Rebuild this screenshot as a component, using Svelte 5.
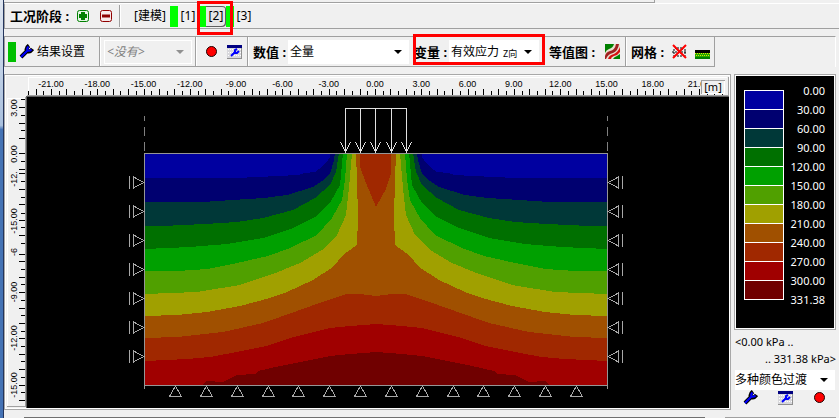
<script lang="ts">
	type Point = [number, number];

	const bands = [
		{ color: '#0000a0', label: '0.00' },
		{ color: '#000070', label: '30.00' },
		{ color: '#003838', label: '60.00' },
		{ color: '#007000', label: '90.00' },
		{ color: '#00a000', label: '120.00' },
		{ color: '#50a000', label: '150.00' },
		{ color: '#a0a000', label: '180.00' },
		{ color: '#a05000', label: '210.00' },
		{ color: '#a02800', label: '240.00' },
		{ color: '#a00000', label: '270.00' },
		{ color: '#700000', label: '300.00' }
	];
	const legendLabels = [...bands.map((b) => b.label), '331.38'];

	// left half of every isoline, from the soil edge towards the axis
	const axis = 376;
	const isolines: Point[][] = [
		[[145, 178], [237, 178], [278, 176], [298, 175], [304, 173], [315, 172], [322, 167], [328, 160], [330, 157], [330, 153]],
		[[145, 202], [203, 202], [232, 200], [264, 198], [287, 195], [300, 191], [313, 187], [322, 181], [330, 174], [334, 160], [335, 153]],
		[[145, 226], [162, 226], [205, 224], [237, 222], [263, 218], [293, 210], [315, 198], [330, 185], [336, 172], [339, 153]],
		[[145, 249], [190, 247], [227, 244], [263, 238], [293, 228], [315, 217], [330, 203], [340, 185], [343, 153]],
		[[145, 271], [177, 271], [207, 269], [237, 263], [268, 256], [290, 248], [317, 235], [332, 218], [342, 200], [345, 180], [347, 153]],
		[[145, 294], [197, 292], [240, 285], [273, 274], [300, 263], [322, 250], [337, 235], [346, 215], [349, 188], [352, 153]],
		[[145, 316], [177, 315], [207, 312], [240, 306], [270, 298], [287, 292], [313, 280], [333, 267], [343, 255], [357, 245], [358, 217], [357, 180], [356, 153]],
		[[145, 338], [177, 337], [223, 332], [263, 323], [297, 311], [328, 300], [347, 294], [360, 294], [376, 296]],
		[[145, 361], [187, 359], [210, 357], [237, 352], [267, 346], [290, 338], [330, 328], [350, 326], [376, 324]],
		[[201, 386], [207, 381], [223, 382], [237, 375], [255, 374], [258, 371], [280, 366], [330, 356], [350, 354], [376, 352]]
	];

	function region(line: Point[]) {
		const right = line.map(([x, y]): Point => [axis * 2 - x, y]).reverse();
		const start = line[0][0];
		const all = [[start, 386], ...line, ...right, [axis * 2 - start, 386]];
		return all.map((p) => p.join(',')).join(' ');
	}

	const scale = 15.43;
	const xTicks = Array.from({ length: 91 }, (_, i) => (i - 45) / 2).map((m) => ({
		x: Math.round(375 + m * scale) + 0.5,
		long: Number.isInteger(m)
	}));
	const xLabels = [-21, -18, -15, -12, -9, -6, -3, 0, 3, 6, 9, 12, 15, 18, 21];

	const yLong = [107, 123, 138, 153, 169, 173, 189, 204, 220, 235, 254, 261, 277, 292, 308, 323, 338, 354, 369, 385, 400];
	const yShort = [99, 115, 130, 161, 181, 197, 213, 227, 243, 269, 284, 300, 315, 331, 346, 361, 377, 392];
	const yLabels = [
		{ y: 108, text: '3.00' },
		{ y: 154, text: '0.00' },
		{ y: 179, text: '-12.' },
		{ y: 221, text: '-15.00' },
		{ y: 252, text: '-6' },
		{ y: 292, text: '-9.00' },
		{ y: 338, text: '-12.00' },
		{ y: 385, text: '-15.00' }
	];

	const sideSupports = [182, 211, 240, 269, 298, 327, 356];
	const baseSupports = [175, 206, 237, 268, 298, 329, 360, 391, 422, 453, 483, 514, 545, 576];
	const loads = [345, 360, 375, 391, 406];

	let stage = $state(2);
</script>

{#snippet wrench()}
	<svg class="icon" viewBox="0 0 15 15" aria-hidden="true">
		<path d="M2 13 L8 7 M10 1.5 Q6.500 4 8 7 Q11 8.500 13.500 5" fill="none" stroke="#000" stroke-width="4" />
		<path d="M2 13 L8 7 M9.500 2.500 Q7.500 4.500 8.500 6.500 Q10.500 7.500 12.500 5.500" fill="none" stroke="#0000ff" stroke-width="2" />
	</svg>
{/snippet}

{#snippet panel()}
	<svg class="icon" viewBox="0 0 15 15" shape-rendering="crispEdges" aria-hidden="true">
		<rect x="0" y="1" width="15" height="14" fill="#d8d8dc" />
		<path d="M0 14.5 H14.5 V4" fill="none" stroke="#909090" />
		<path d="M1 5.5 H14 M1 8.5 H14 M1 11.5 H14" stroke="#fff" stroke-dasharray="1 1" />
		<rect x="0" y="1" width="15" height="3" fill="#000080" />
		<path d="M4 12 L8 8 V6 L10 5 M8 9 H10 L12 7" fill="none" stroke="#0000ff" stroke-width="2" shape-rendering="auto" />
	</svg>
{/snippet}

{#snippet record()}
	<svg class="icon" viewBox="0 0 15 15" aria-hidden="true">
		<circle cx="7.5" cy="7.5" r="5" fill="#ff0000" stroke="#200000" />
	</svg>
{/snippet}

<div class="window">
	<div class="edge"></div>
	<div class="content">
		<div class="strip"></div>

		<div class="stages">
			<strong>工况阶段 :</strong>
			<button class="tool" aria-label="添加工况">
				<svg class="icon small" viewBox="0 0 12 12" aria-hidden="true">
					<rect x=".5" y=".5" width="11" height="11" rx="2" fill="#e4f4e4" stroke="#008000" />
					<path d="M6 2 V10 M2 6 H10" stroke="#008000" stroke-width="4" />
				</svg>
			</button>
			<button class="tool" aria-label="删除工况">
				<svg class="icon small" viewBox="0 0 12 12" aria-hidden="true">
					<rect x=".5" y=".5" width="11" height="11" rx="2" fill="#f8e8e8" stroke="#900000" />
					<path d="M2 6 H10" stroke="#900000" stroke-width="3" />
				</svg>
			</button>
			<span class="sep"></span>
			<button class="model">[建模]</button>
			{#each [1, 2, 3] as n (n)}
				<div class="stage-slot" class:marked={n === 2}>
					<button class="stage" class:pressed={stage === n} onclick={() => (stage = n)}>[{n}]</button>
				</div>
			{/each}
		</div>

		<div class="toolbar">
			<div class="tools">
				<button class="settings">{@render wrench()}结果设置</button>
				<span class="sep"></span>
				<span class="combo disabled">
					<select aria-label="结果视图" disabled><option>&lt;没有&gt;</option></select>
					<i class="arrow"></i>
				</span>
				<span class="sep"></span>
				<div class="pair">
					<button class="tool" aria-label="记录">{@render record()}</button>
					<button class="tool" aria-label="窗口设置">{@render panel()}</button>
				</div>
				<span class="sep"></span>
				<div class="field values-field">
					<label for="values">数值 :</label>
					<span class="combo wide">
						<select id="values"><option>全量</option></select>
						<i class="arrow"></i>
					</span>
				</div>
				<div class="field marked-field">
					<label for="variable">变量 :</label>
					<span class="combo variable">
						<select id="variable"><option>有效应力</option></select>
						<small>Z向</small>
						<i class="arrow"></i>
					</span>
				</div>
				<div class="field contour">
					<strong>等值图 :</strong>
					<button class="tool" aria-label="等值图">
						<svg class="icon" viewBox="0 0 15 15" aria-hidden="true">
							<rect width="15" height="15" fill="#e8e0d0" />
							<path d="M0 0 H9 Q8 4 4 5 Q1 6 0 9 Z" fill="#008000" />
							<path d="M0 12 Q1 8 5 7 Q10 6 11 0 H14 Q13 7 8 9 Q3 10 1 15 H0 Z" fill="#a02020" />
							<path d="M3 15 Q4 11 9 10 Q13 8 15 3 V8 Q13 11 9 12 Q6 13 6 15 Z" fill="#d81010" />
							<path d="M8 15 Q9 13 12 12 L15 10 V15 Z" fill="#008000" />
						</svg>
					</button>
				</div>
				<span class="sep"></span>
				<div class="field mesh">
					<strong>网格 :</strong>
					<button class="tool" aria-label="隐藏网格">
						<svg class="icon" viewBox="0 0 15 15" aria-hidden="true">
							<path d="M0 8 H15 M3 4 L12 12 M3 12 L12 4 M2 5 V12 M13 5 V12 M5 4 H10 M5 12 H10" fill="none" stroke="#000" stroke-dasharray="2 1" />
							<path d="M1 1 L14 14 M14 1 L1 14" stroke="#ff0000" stroke-width="2" />
						</svg>
					</button>
					<button class="tool" aria-label="显示地表">
						<svg class="icon" viewBox="0 0 15 15" shape-rendering="crispEdges" aria-hidden="true">
							<rect y="6" width="15" height="3" fill="#000" />
							<rect y="9" width="15" height="6" fill="#20a800" />
							<path d="M0 9.5 H15 M1 11.5 H15" stroke="#e0e000" stroke-dasharray="1 1" />
							<rect y="13" width="15" height="2" fill="#008000" />
						</svg>
					</button>
				</div>
			</div>
		</div>

		<main>
			<div class="frame">
				<svg class="plot" viewBox="6 76 723 332" shape-rendering="crispEdges" role="img" aria-label="有效应力 Z向">
					<rect x="6" y="76" width="723" height="332" fill="#f0f0f0" />
					<rect x="27" y="97" width="702" height="311" />

					<!-- rulers -->
					<path d="M28.5 95 V77.5 H727 M7.5 406 V98.5 H25" fill="none" stroke="#fff" />
					<path d="M27 95.5 H728.5 V77 M7 406.5 H25.5 V97" fill="none" stroke="#a0a0a0" />
					<path d="M27 96.5 H729 M26.5 96 V408" fill="none" stroke="#606060" />
					{#each xTicks as t}
						<line x1={t.x} x2={t.x} y1={t.long ? 89 : 91} y2="95" stroke="#000" />
					{/each}
					{#each xLabels as m}
						<text x={375 + m * scale} y="87" text-anchor="middle">{m.toFixed(2)}</text>
					{/each}
					{#each yLong as y}
						<line x1="19" x2="25" y1={y + 0.5} y2={y + 0.5} stroke="#000" />
					{/each}
					{#each yShort as y}
						<line x1="21" x2="25" y1={y + 0.5} y2={y + 0.5} stroke="#000" />
					{/each}
					{#each yLabels as l}
						<text transform="translate(17 {l.y}) rotate(-90)" text-anchor="middle">{l.text}</text>
					{/each}
					<rect x="701.5" y="80.5" width="23" height="13" fill="#f0f0f0" stroke="#a0a0a0" />
					<path d="M702 93.5 H724.5 V81" fill="none" stroke="#fff" />
					<text class="unit" x="713" y="91" text-anchor="middle">[m]</text>

					<!-- stress field -->
					<rect x="145" y="154" width="462" height="232" fill={bands[0].color} />
					{#each isolines as line, i}
						<polygon points={region(line)} fill={bands[i + 1].color} />
					{/each}
					<polygon points="360,153 360,167 366,183 376,207 386,189 391,173 391,153" fill={bands[8].color} />

					<path d="M144.5 389 V153.5 H607.5 V389 M144 385.5 H608" fill="none" stroke="#969696" />
					{#each [144.5, 607.5] as x}
						<path d="M{x} 116 V121 M{x} 127 V136 M{x} 142 V151" stroke="#808080" />
					{/each}

					<!-- supports -->
					<g fill="none" stroke="#a8a8a8">
						{#each sideSupports as y}
							<path d="M129.5 {y - 6} V{y + 7} M133.5 {y - 6} V{y + 6} L144 {y + 0.5} L133.5 {y - 5}" />
							<path d="M622.5 {y - 6} V{y + 7} M618.5 {y - 6} V{y + 6} L608 {y + 0.5} L618.5 {y - 5}" />
						{/each}
						{#each baseSupports as x}
							<path d="M{x + 0.5} 386 L{x - 5.5} 396.5 H{x + 6.5} Z" />
						{/each}
					</g>

					<!-- surface load -->
					<g fill="none" stroke="#e0e0e0">
						<path d="M345 108.5 H407" />
						{#each loads as x}
							<path d="M{x + 0.5} 108 V153 M{x - 4.5} 142 L{x + 0.5} 152 L{x + 5.5} 142" />
						{/each}
					</g>
				</svg>
			</div>

			<aside>
				<div class="legend">
					<div class="swatches">
						{#each bands as b}
							<span style="background-color: {b.color}"></span>
						{/each}
					</div>
					<div class="values">
						{#each legendLabels as l}
							<span>{l}</span>
						{/each}
					</div>
				</div>
				<p class="range">&lt;0.00 kPa ..</p>
				<p class="range end">.. 331.38 kPa&gt;</p>
				<span class="combo palette">
					<select aria-label="颜色"><option>多种颜色过渡</option></select>
					<i class="arrow"></i>
				</span>
				<div class="actions">
					<button class="tool" aria-label="设置">{@render wrench()}</button>
					<button class="tool" aria-label="窗口设置">{@render panel()}</button>
					<button class="tool" aria-label="记录">{@render record()}</button>
				</div>
			</aside>
		</main>
		<footer><span></span><span></span></footer>
	</div>
</div>

<style>
	:global(body) {
		background-color: #f0f0f0;
	}

	.window {
		display: flex;
		font-family: 'Noto Sans', 'Noto Sans CJK SC', sans-serif;
		font-size: 12px;
		line-height: 16px;
		color: #000;
		background-color: #f0f0f0;
	}

	.edge {
		flex: none;
		width: 3px;
		border-right: 1px solid #24355c;
		background: linear-gradient(#dfe6f0, #a9c0de 30%, #4573b5 31%, #4573b5);
	}

	.content {
		flex: 1;
		min-width: 0;
	}

	.strip {
		box-sizing: border-box;
		width: 78%;
		height: 3px;
		border-right: 1px solid #a0a0a0;
		border-bottom: 1px solid #a0a0a0;
	}

	button,
	select {
		margin: 0;
		padding: 0;
		border: 0;
		font: inherit;
		color: inherit;
		background: none;
		appearance: none;
	}

	.tool {
		display: flex;
	}

	.icon {
		display: block;
		width: 15px;
		height: 15px;
	}

	.icon.small {
		width: 12px;
		height: 12px;
	}

	strong,
	label {
		font-size: 13px;
		font-weight: 700;
		white-space: nowrap;
	}

	.sep {
		align-self: stretch;
		flex: none;
		width: 1px;
		background-color: #a0a0a0;
		border-right: 1px solid #fff;
	}

	.stages {
		display: flex;
		align-items: center;
		box-sizing: border-box;
		height: 26px;
		padding-left: 5px;
		border-left: 1px solid #a0a0a0;
		border-top: 1px solid #fff;
		border-bottom: 1px solid #a0a0a0;
	}

	.stages strong {
		width: 65px;
	}

	.stages .tool {
		margin-left: 2px;
		margin-right: 9px;
	}

	.stages .sep {
		margin: 1px 13px 1px -2px;
	}

	.model {
		width: 36px;
		white-space: nowrap;
		text-align: left;
	}

	.stage-slot {
		position: relative;
	}

	.stage {
		box-sizing: border-box;
		display: block;
		width: 28px;
		height: 21px;
		border-left: 8px solid #00ff00;
		text-align: center;
	}

	.stage.pressed {
		border-radius: 0 4px 4px 0;
		background-color: #e6e6e6;
		box-shadow: inset -1px -1px 0 #606060, inset 0 1px 0 #606060;
	}

	.marked::after,
	.marked-field::after {
		content: '';
		position: absolute;
		z-index: 1;
		border: 3px solid #ff0000;
		pointer-events: none;
	}

	.marked::after {
		inset: -5px -7px -8px -1px;
	}

	.toolbar {
		display: flex;
		margin: 7px 3px 7px 0;
		border-top: 1px solid #a0a0a0;
		border-left: 1px solid #a0a0a0;
		border-right: 1px solid #fff;
	}

	.tools {
		display: flex;
		align-items: center;
		height: 29px;
		padding-left: 3px;
		border-right: 1px solid #a0a0a0;
		border-bottom: 1px solid #a0a0a0;
	}

	.settings {
		display: flex;
		align-items: center;
		gap: 3px;
		width: 91px;
		height: 20px;
		padding-left: 3px;
		border-left: 8px solid #00c000;
		box-sizing: border-box;
		white-space: nowrap;
	}

	.combo {
		display: flex;
		align-items: center;
		box-sizing: border-box;
		height: 24px;
		padding: 0 7px 0 2px;
		background-color: #fff;
	}

	.combo select {
		flex: 1;
		min-width: 0;
		height: 20px;
	}

	.combo.disabled {
		width: 88px;
		margin: 0 3px;
		border: 1px solid #fff;
		background: none;
		color: #808080;
		font-style: italic;
	}

	.disabled select {
		opacity: 1;
	}

	.disabled .arrow {
		border-top-color: #909090;
	}

	.arrow {
		flex: none;
		border: 4px solid transparent;
		border-top-color: #000;
		border-bottom: 0;
	}

	.pair {
		display: flex;
		gap: 8px;
		padding: 0 5px 0 7px;
	}

	.field {
		position: relative;
		display: flex;
		align-items: center;
	}

	.field label {
		width: 35px;
	}

	.values-field {
		padding-left: 4px;
	}

	.combo.wide {
		width: 121px;
	}

	.marked-field {
		margin-left: 5px;
	}

	.combo.variable {
		width: 90px;
	}

	.variable select {
		flex: none;
	}

	small {
		flex: 1;
		padding: 5px 0 0 3px;
		font-size: 9px;
		line-height: 12px;
		white-space: nowrap;
	}

	.marked-field::after {
		inset: -6px -6px -1px -1px;
	}

	.contour {
		padding: 0 5px 0 10px;
	}

	.contour strong {
		width: 56px;
	}

	.mesh {
		gap: 8px;
		padding: 0 4px;
	}

	.mesh strong {
		width: 33px;
	}

	main {
		display: grid;
		grid-template-columns: 1fr 102px;
		gap: 3px;
		padding-right: 3px;
	}

	.frame {
		padding: 1px;
		border: 1px solid #a8a8a8;
		background-color: #fff;
	}

	.plot {
		display: block;
		width: 100%;
		height: auto;
	}

	.plot text {
		font-family: 'Liberation Sans', sans-serif;
		font-size: 9px;
	}

	.plot .unit {
		font-family: 'Noto Sans', sans-serif;
		font-size: 11px;
	}

	aside {
		font-size: 11px;
	}

	.legend {
		display: flex;
		justify-content: space-between;
		padding: 6px 10px 20px 9px;
		border: 1px solid #a8a8a8;
		outline: 1px solid #fff;
		outline-offset: -2px;
		background-color: #000;
	}

	.swatches {
		display: flex;
		flex-direction: column;
		width: 40px;
		padding-top: 9px;
	}

	.swatches span {
		box-sizing: border-box;
		height: 19px;
		border: 1px solid #fff;
		border-bottom: 0;
	}

	.swatches span:last-child {
		height: 20px;
		border-bottom: 1px solid #fff;
	}

	.values {
		display: grid;
		grid-auto-rows: 19px;
		line-height: 19px;
		text-align: right;
		color: #fff;
	}

	.range {
		margin: 4px 0 0 1px;
		line-height: 16px;
	}

	.range.end {
		margin: 1px 0 3px;
		text-align: right;
	}

	.combo.palette {
		height: 20px;
		margin: 0 1px;
		padding-left: 0;
		font-size: 12px;
	}

	.actions {
		display: flex;
		justify-content: space-between;
		padding: 0 9px;
	}

	footer {
		display: flex;
		gap: 20px;
		padding: 7px 3px 0 20px;
	}

	footer span {
		flex: 1;
		height: 1px;
		background-color: #707070;
	}

	footer span:last-child {
		flex: 0 0 111px;
		background-color: #a0a0a0;
	}
</style>
